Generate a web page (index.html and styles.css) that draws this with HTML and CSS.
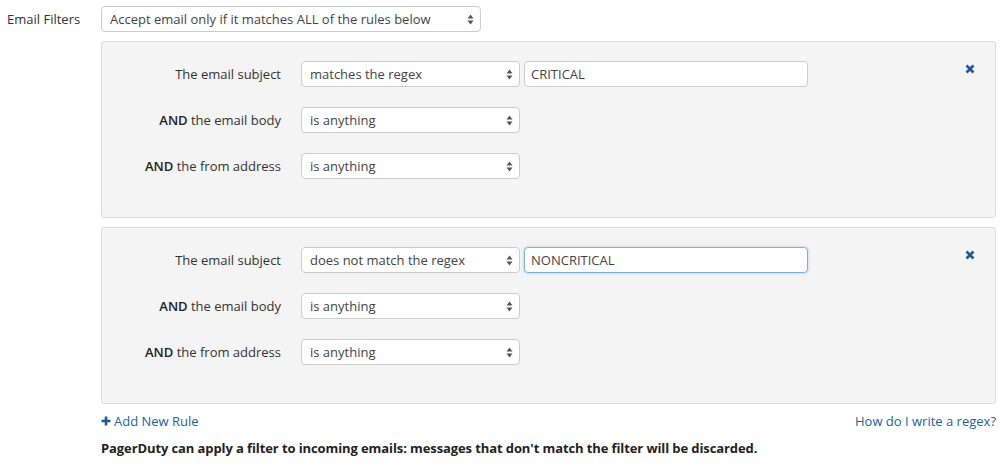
FILE: index.html
```html
<!DOCTYPE html>
<html>
<head>
<meta charset="utf-8">
<link rel="stylesheet" href="styles.css">
</head>
<body>
<div class="form-row">
  <div class="form-label">Email Filters</div>
  <div class="form-field">
    <div class="select select-main"><span>Accept email only if it matches ALL of the rules below</span><svg class="arrows" width="7" height="11" viewBox="0 0 7 11"><path d="M3.5 0.5 L6.5 4.5 L0.5 4.5 Z M3.5 10.5 L6.5 6.5 L0.5 6.5 Z" fill="#555"/></svg></div>

    <div class="panel">
      <span class="remove"><svg width="10" height="10" viewBox="0 0 10 10"><path d="M1.5 1.5 L8.5 8.5 M8.5 1.5 L1.5 8.5" stroke="#1f5a96" stroke-width="2.6" stroke-linecap="butt"/></svg></span>
      <div class="rule">
        <div class="rule-label">The email subject</div>
        <div class="select select-rule"><span>matches the regex</span><svg class="arrows" width="7" height="11" viewBox="0 0 7 11"><path d="M3.5 0.5 L6.5 4.5 L0.5 4.5 Z M3.5 10.5 L6.5 6.5 L0.5 6.5 Z" fill="#555"/></svg></div>
        <div class="input">CRITICAL</div>
      </div>
      <div class="rule">
        <div class="rule-label"><b>AND</b> the email body</div>
        <div class="select select-rule"><span>is anything</span><svg class="arrows" width="7" height="11" viewBox="0 0 7 11"><path d="M3.5 0.5 L6.5 4.5 L0.5 4.5 Z M3.5 10.5 L6.5 6.5 L0.5 6.5 Z" fill="#555"/></svg></div>
      </div>
      <div class="rule">
        <div class="rule-label"><b>AND</b> the from address</div>
        <div class="select select-rule"><span>is anything</span><svg class="arrows" width="7" height="11" viewBox="0 0 7 11"><path d="M3.5 0.5 L6.5 4.5 L0.5 4.5 Z M3.5 10.5 L6.5 6.5 L0.5 6.5 Z" fill="#555"/></svg></div>
      </div>
    </div>

    <div class="panel">
      <span class="remove"><svg width="10" height="10" viewBox="0 0 10 10"><path d="M1.5 1.5 L8.5 8.5 M8.5 1.5 L1.5 8.5" stroke="#1f5a96" stroke-width="2.6" stroke-linecap="butt"/></svg></span>
      <div class="rule">
        <div class="rule-label">The email subject</div>
        <div class="select select-rule"><span>does not match the regex</span><svg class="arrows" width="7" height="11" viewBox="0 0 7 11"><path d="M3.5 0.5 L6.5 4.5 L0.5 4.5 Z M3.5 10.5 L6.5 6.5 L0.5 6.5 Z" fill="#555"/></svg></div>
        <div class="input input-focus">NONCRITICAL</div>
      </div>
      <div class="rule">
        <div class="rule-label"><b>AND</b> the email body</div>
        <div class="select select-rule"><span>is anything</span><svg class="arrows" width="7" height="11" viewBox="0 0 7 11"><path d="M3.5 0.5 L6.5 4.5 L0.5 4.5 Z M3.5 10.5 L6.5 6.5 L0.5 6.5 Z" fill="#555"/></svg></div>
      </div>
      <div class="rule">
        <div class="rule-label"><b>AND</b> the from address</div>
        <div class="select select-rule"><span>is anything</span><svg class="arrows" width="7" height="11" viewBox="0 0 7 11"><path d="M3.5 0.5 L6.5 4.5 L0.5 4.5 Z M3.5 10.5 L6.5 6.5 L0.5 6.5 Z" fill="#555"/></svg></div>
      </div>
    </div>

    <div class="links">
      <a class="link add"><svg width="10" height="10" viewBox="0 0 10 10"><path d="M5 0.5 V9.5 M0.5 5 H9.5" stroke="#1f5a96" stroke-width="2.6"/></svg>Add New Rule</a>
      <a class="link">How do I write a regex?</a>
    </div>
    <p class="help">PagerDuty can apply a filter to incoming emails: messages that don't match the filter will be discarded.</p>
  </div>
</div>
</body>
</html>
```

FILE: styles.css
```css
* { box-sizing: border-box; }
body {
  margin: 0;
  font-family: "Open Sans", "Liberation Sans", sans-serif;
  font-size: 13px;
  color: #333;
  background: #fff;
}
.form-row {
  display: flex;
  padding: 6px 8px 0 7px;
}
.form-label {
  width: 94px;
  flex: none;
  line-height: 26px;
  color: #333;
}
.form-field {
  flex: 1;
  display: flex;
  flex-direction: column;
}
.select {
  display: flex;
  align-items: center;
  justify-content: space-between;
  height: 26px;
  background: #fff;
  border: 1px solid #ccc;
  border-radius: 4px;
  padding: 0 6px 0 8px;
  color: #444;
  white-space: nowrap;
}
.select-main { width: 380px; }
.select-rule { width: 219px; }
.arrows { flex: none; }
.panel {
  position: relative;
  margin-top: 9px;
  background: #f4f4f4;
  border: 1px solid #dcdcdc;
  border-radius: 3px;
  padding: 19px 0 38px 0;
  display: flex;
  flex-direction: column;
  gap: 20px;
}
.remove {
  position: absolute;
  top: 22px;
  right: 20px;
  display: flex;
}
.rule {
  display: flex;
  align-items: center;
  height: 26px;
}
.rule-label {
  width: 179px;
  text-align: right;
  margin-right: 20px;
  color: #333;
}
.rule-label b { font-weight: 600; color: #222; }
.input {
  margin-left: 4px;
  width: 284px;
  height: 26px;
  line-height: 24px;
  background: #fff;
  border: 1px solid #ccc;
  border-radius: 4px;
  padding: 0 6px;
  color: #444;
}
.input-focus {
  border-color: #7fb0e0;
  box-shadow: 0 0 3px rgba(90, 150, 220, 0.45);
}
.links {
  display: flex;
  justify-content: space-between;
  margin-top: 8px;
  line-height: 18px;
}
.link {
  color: #22639f;
  cursor: pointer;
  display: flex;
  align-items: center;
}
.add svg { margin-right: 3px; }
.help {
  margin: 9px 0 0 0;
  font-weight: 700;
  letter-spacing: -0.1px;
  color: #222;
  line-height: 18px;
}
```
